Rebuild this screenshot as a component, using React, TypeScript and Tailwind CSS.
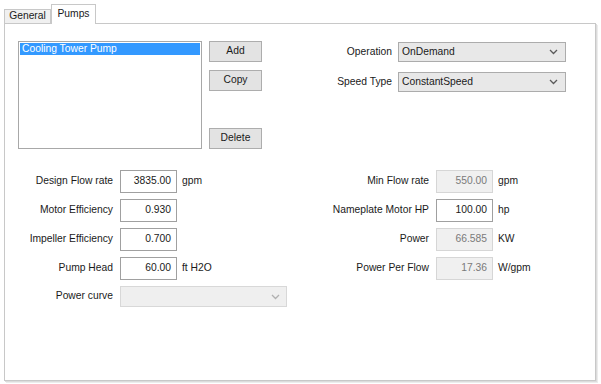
import React from "react";

const Chevron = ({ color = "#5a5a5a" }: { color?: string }) => (
  <svg width="9" height="6" viewBox="0 0 9 6" className="shrink-0">
    <path d="M1 1 L4.5 4.5 L8 1" fill="none" stroke={color} strokeWidth="1.3" />
  </svg>
);

const Field = ({
  label,
  value,
  unit,
  disabled,
  labelW,
}: {
  label: string;
  value: string;
  unit?: string;
  disabled?: boolean;
  labelW: string;
}) => (
  <div className="flex items-center h-[23px]">
    <div className={`${labelW} shrink-0 text-right text-[#1a1a1a]`}>{label}</div>
    <div
      className={`ml-[7px] shrink-0 w-[57px] h-[23px] flex items-center justify-end pr-[5px] border ${
        disabled ? "bg-[#f0f0f0] border-[#d6d6d6] text-[#7a7a7a]" : "bg-white border-[#a0a0a0] text-[#1a1a1a]"
      }`}
    >
      {value}
    </div>
    {unit && <div className="ml-[5px] text-[#1a1a1a]">{unit}</div>}
  </div>
);

const Button = ({ children }: { children: React.ReactNode }) => (
  <div className="w-[53px] h-[21px] flex items-center justify-center bg-[#e3e3e3] border border-[#adadad] text-[#1a1a1a]">
    {children}
  </div>
);

export default function App() {
  return (
    <div
      className="w-[601px] h-[384px] bg-white relative text-[10.3px] leading-none"
      style={{ fontFamily: '"Liberation Sans", Arial, sans-serif' }}
    >
      {/* Tabs */}
      <div className="flex items-end pl-[4px] pt-[3px] h-[23px]">
        <div className="w-[47px] h-[14px] bg-[#f0f0f0] border border-[#c8c8c8] border-b-0 flex items-center justify-center text-[#1a1a1a]">
          General
        </div>
        <div className="relative z-10 w-[45px] h-[20px] bg-white border border-[#c8c8c8] border-b-0 -mb-[1px] flex items-start justify-center pt-[4px] text-[#1a1a1a]">
          Pumps
        </div>
      </div>
      {/* Panel */}
      <div className="ml-[4px] w-[592px] h-[358px] border border-[#c8c8c8] shadow-[1px_1px_0_#dcdcdc,2px_2px_0_#ececec] flex flex-col">
        {/* Top section */}
        <div className="flex pt-[17px] pl-[13px]">
          <div className="shrink-0 w-[184px] h-[108px] border border-[#a8a8a8] p-[1px] bg-white">
            <div className="h-[12px] bg-[#3399ff] text-white flex items-center pl-[2px]">Cooling Tower Pump</div>
          </div>
          <div className="shrink-0 ml-[7px] flex flex-col">
            <Button>Add</Button>
            <div className="mt-[8px]">
              <Button>Copy</Button>
            </div>
            <div className="mt-[37px]">
              <Button>Delete</Button>
            </div>
          </div>
          <div className="shrink-0 ml-[50px] flex flex-col gap-[10px] pt-[1px]">
            {[
              ["Operation", "OnDemand"],
              ["Speed Type", "ConstantSpeed"],
            ].map(([l, v]) => (
              <div key={l} className="flex items-center h-[20px]">
                <div className="w-[80px] text-right text-[#1a1a1a]">{l}</div>
                <div className="ml-[6px] w-[168px] h-[20px] bg-[#e8e8e8] border border-[#acacac] flex items-center justify-between pl-[3px] pr-[7px] text-[#1a1a1a]">
                  <span>{v}</span>
                  <Chevron />
                </div>
              </div>
            ))}
          </div>
        </div>
        {/* Form section */}
        <div className="flex mt-[21px]">
          <div className="shrink-0 w-[300px] flex flex-col gap-[6px]">
            <Field labelW="w-[108px]" label="Design Flow rate" value="3835.00" unit="gpm" />
            <Field labelW="w-[108px]" label="Motor Efficiency" value="0.930" />
            <Field labelW="w-[108px]" label="Impeller Efficiency" value="0.700" />
            <Field labelW="w-[108px]" label="Pump Head" value="60.00" unit="ft H2O" />
            <div className="flex items-center h-[21px]">
              <div className="w-[108px] text-right text-[#1a1a1a]">Power curve</div>
              <div className="ml-[7px] w-[167px] h-[21px] bg-[#efefef] border border-[#d8d8d8] flex items-center justify-end pr-[6px]">
                <Chevron color="#b0b0b0" />
              </div>
            </div>
          </div>
          <div className="flex flex-col gap-[6px]">
            <Field labelW="w-[124px]" label="Min Flow rate" value="550.00" unit="gpm" disabled />
            <Field labelW="w-[124px]" label="Nameplate Motor HP" value="100.00" unit="hp" />
            <Field labelW="w-[124px]" label="Power" value="66.585" unit="KW" disabled />
            <Field labelW="w-[124px]" label="Power Per Flow" value="17.36" unit="W/gpm" disabled />
          </div>
        </div>
      </div>
    </div>
  );
}
